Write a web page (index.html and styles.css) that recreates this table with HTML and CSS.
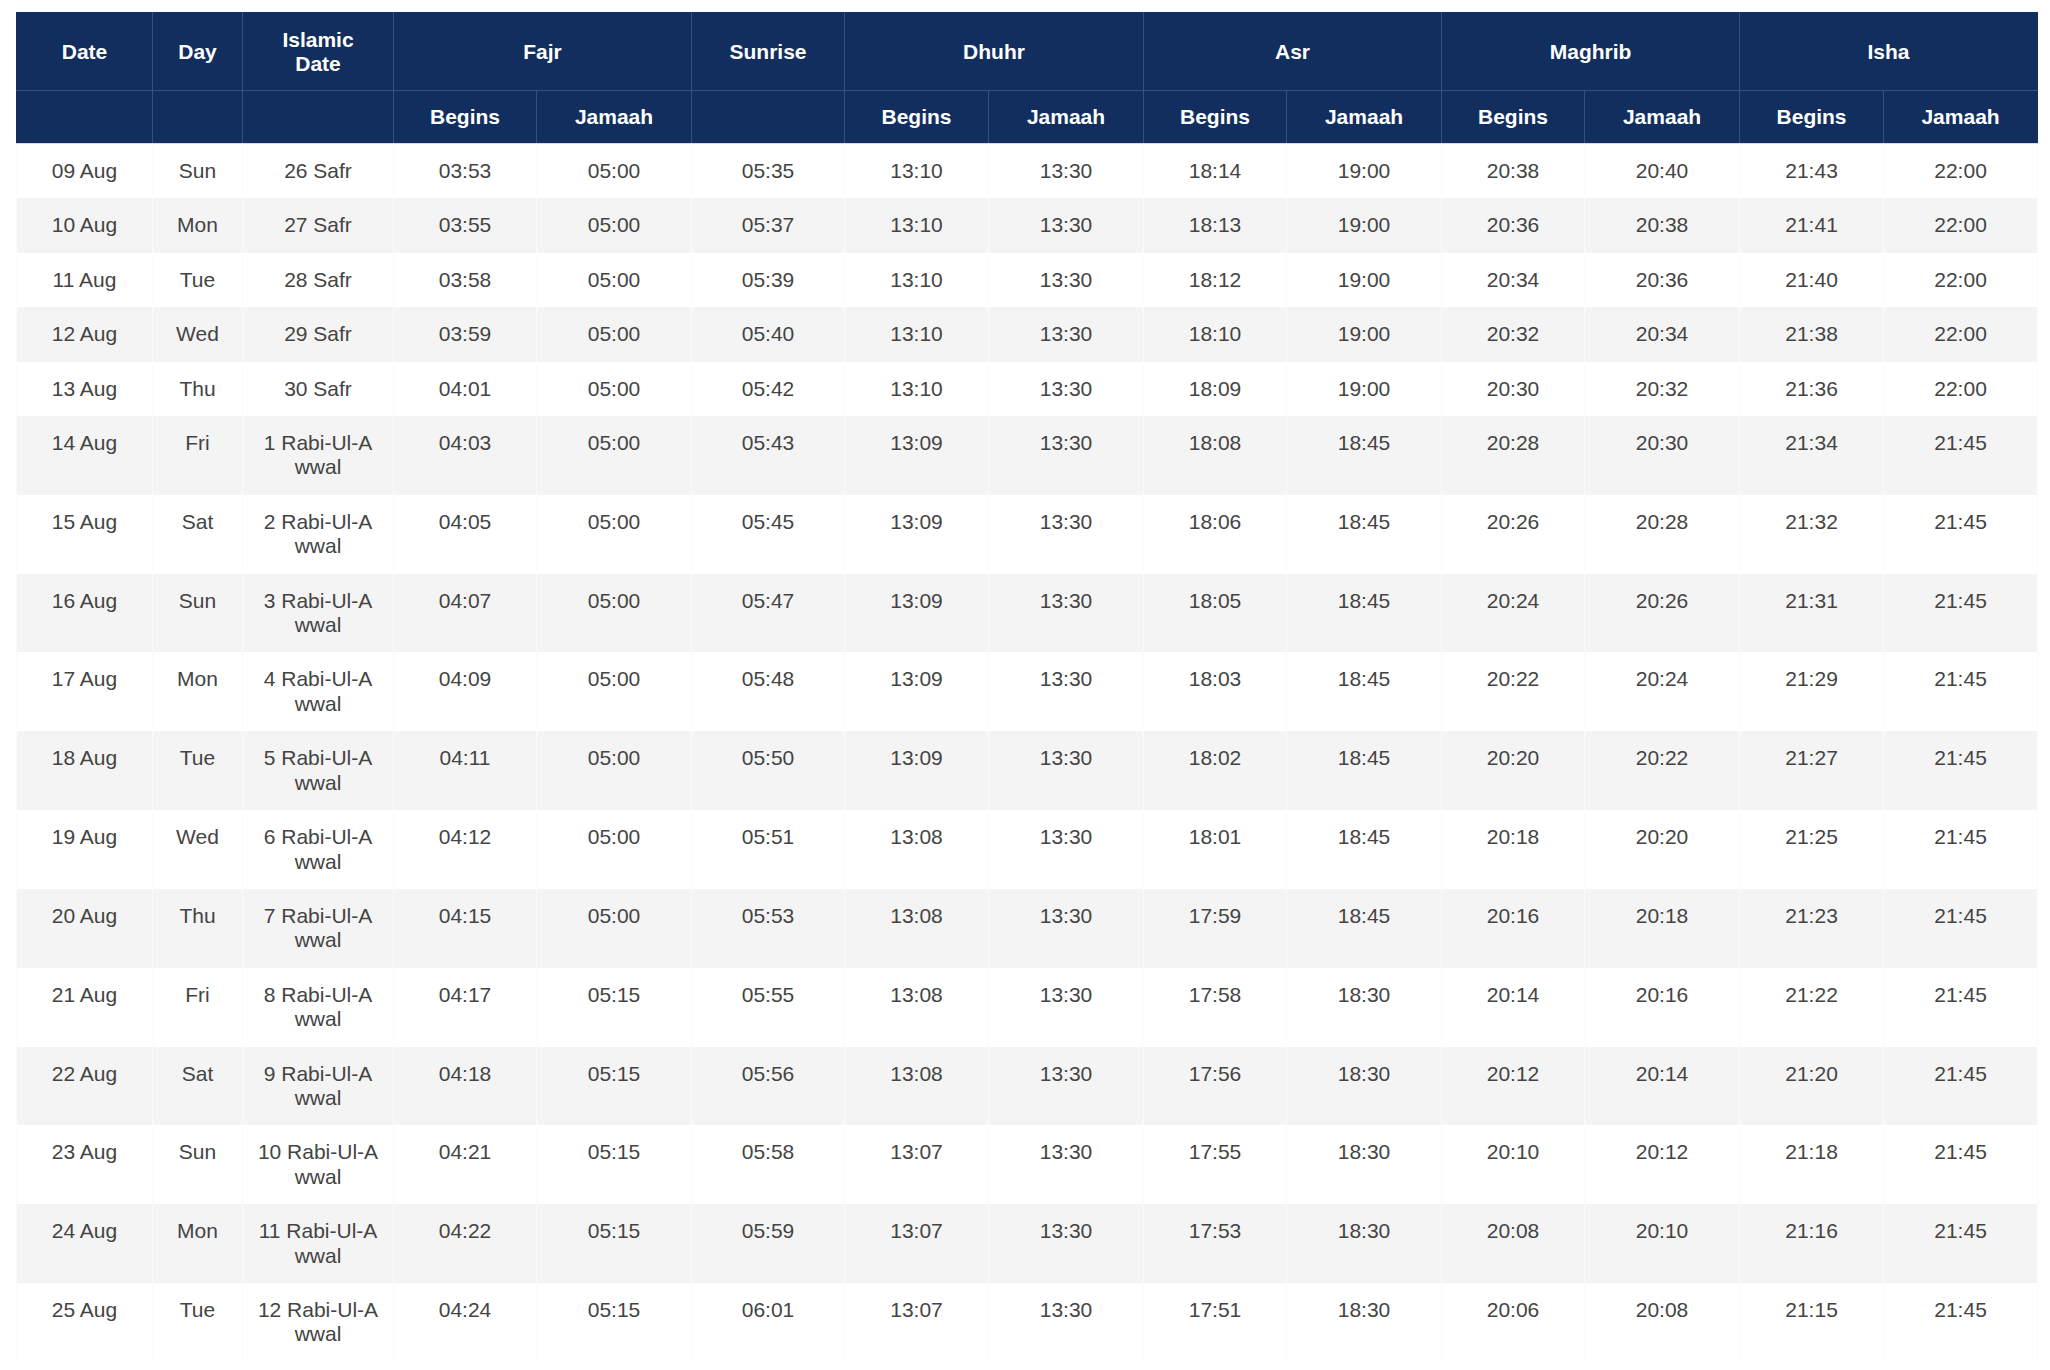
FILE: index.html
```html
<!DOCTYPE html>
<html lang="en">
<head>
<meta charset="utf-8">
<title>Prayer Timetable</title>
<link rel="stylesheet" href="styles.css">
</head>
<body>
<div class="wrap">
<table class="times">
<colgroup>
<col class="c-date"><col class="c-day"><col class="c-isl">
<col class="c-fb"><col class="c-fj"><col class="c-sun">
<col class="c-db"><col class="c-dj"><col class="c-ab"><col class="c-aj">
<col class="c-mb"><col class="c-mj"><col class="c-ib"><col class="c-ij">
</colgroup>
<thead>
<tr class="h1">
<th>Date</th><th>Day</th><th>Islamic<br>Date</th>
<th colspan="2">Fajr</th><th>Sunrise</th><th colspan="2">Dhuhr</th>
<th colspan="2">Asr</th><th colspan="2">Maghrib</th><th colspan="2">Isha</th>
</tr>
<tr class="h2">
<th></th><th></th><th></th>
<th>Begins</th><th>Jamaah</th><th></th>
<th>Begins</th><th>Jamaah</th><th>Begins</th><th>Jamaah</th>
<th>Begins</th><th>Jamaah</th><th>Begins</th><th>Jamaah</th>
</tr>
</thead>
<tbody>
<tr><td>09 Aug</td><td>Sun</td><td class="isl">26 Safr</td><td>03:53</td><td>05:00</td><td>05:35</td><td>13:10</td><td>13:30</td><td>18:14</td><td>19:00</td><td>20:38</td><td>20:40</td><td>21:43</td><td>22:00</td></tr>
<tr><td>10 Aug</td><td>Mon</td><td class="isl">27 Safr</td><td>03:55</td><td>05:00</td><td>05:37</td><td>13:10</td><td>13:30</td><td>18:13</td><td>19:00</td><td>20:36</td><td>20:38</td><td>21:41</td><td>22:00</td></tr>
<tr><td>11 Aug</td><td>Tue</td><td class="isl">28 Safr</td><td>03:58</td><td>05:00</td><td>05:39</td><td>13:10</td><td>13:30</td><td>18:12</td><td>19:00</td><td>20:34</td><td>20:36</td><td>21:40</td><td>22:00</td></tr>
<tr><td>12 Aug</td><td>Wed</td><td class="isl">29 Safr</td><td>03:59</td><td>05:00</td><td>05:40</td><td>13:10</td><td>13:30</td><td>18:10</td><td>19:00</td><td>20:32</td><td>20:34</td><td>21:38</td><td>22:00</td></tr>
<tr><td>13 Aug</td><td>Thu</td><td class="isl">30 Safr</td><td>04:01</td><td>05:00</td><td>05:42</td><td>13:10</td><td>13:30</td><td>18:09</td><td>19:00</td><td>20:30</td><td>20:32</td><td>21:36</td><td>22:00</td></tr>
<tr><td>14 Aug</td><td>Fri</td><td class="isl">1 Rabi-Ul-Awwal</td><td>04:03</td><td>05:00</td><td>05:43</td><td>13:09</td><td>13:30</td><td>18:08</td><td>18:45</td><td>20:28</td><td>20:30</td><td>21:34</td><td>21:45</td></tr>
<tr><td>15 Aug</td><td>Sat</td><td class="isl">2 Rabi-Ul-Awwal</td><td>04:05</td><td>05:00</td><td>05:45</td><td>13:09</td><td>13:30</td><td>18:06</td><td>18:45</td><td>20:26</td><td>20:28</td><td>21:32</td><td>21:45</td></tr>
<tr><td>16 Aug</td><td>Sun</td><td class="isl">3 Rabi-Ul-Awwal</td><td>04:07</td><td>05:00</td><td>05:47</td><td>13:09</td><td>13:30</td><td>18:05</td><td>18:45</td><td>20:24</td><td>20:26</td><td>21:31</td><td>21:45</td></tr>
<tr><td>17 Aug</td><td>Mon</td><td class="isl">4 Rabi-Ul-Awwal</td><td>04:09</td><td>05:00</td><td>05:48</td><td>13:09</td><td>13:30</td><td>18:03</td><td>18:45</td><td>20:22</td><td>20:24</td><td>21:29</td><td>21:45</td></tr>
<tr><td>18 Aug</td><td>Tue</td><td class="isl">5 Rabi-Ul-Awwal</td><td>04:11</td><td>05:00</td><td>05:50</td><td>13:09</td><td>13:30</td><td>18:02</td><td>18:45</td><td>20:20</td><td>20:22</td><td>21:27</td><td>21:45</td></tr>
<tr><td>19 Aug</td><td>Wed</td><td class="isl">6 Rabi-Ul-Awwal</td><td>04:12</td><td>05:00</td><td>05:51</td><td>13:08</td><td>13:30</td><td>18:01</td><td>18:45</td><td>20:18</td><td>20:20</td><td>21:25</td><td>21:45</td></tr>
<tr><td>20 Aug</td><td>Thu</td><td class="isl">7 Rabi-Ul-Awwal</td><td>04:15</td><td>05:00</td><td>05:53</td><td>13:08</td><td>13:30</td><td>17:59</td><td>18:45</td><td>20:16</td><td>20:18</td><td>21:23</td><td>21:45</td></tr>
<tr><td>21 Aug</td><td>Fri</td><td class="isl">8 Rabi-Ul-Awwal</td><td>04:17</td><td>05:15</td><td>05:55</td><td>13:08</td><td>13:30</td><td>17:58</td><td>18:30</td><td>20:14</td><td>20:16</td><td>21:22</td><td>21:45</td></tr>
<tr><td>22 Aug</td><td>Sat</td><td class="isl">9 Rabi-Ul-Awwal</td><td>04:18</td><td>05:15</td><td>05:56</td><td>13:08</td><td>13:30</td><td>17:56</td><td>18:30</td><td>20:12</td><td>20:14</td><td>21:20</td><td>21:45</td></tr>
<tr><td>23 Aug</td><td>Sun</td><td class="isl">10 Rabi-Ul-Awwal</td><td>04:21</td><td>05:15</td><td>05:58</td><td>13:07</td><td>13:30</td><td>17:55</td><td>18:30</td><td>20:10</td><td>20:12</td><td>21:18</td><td>21:45</td></tr>
<tr><td>24 Aug</td><td>Mon</td><td class="isl">11 Rabi-Ul-Awwal</td><td>04:22</td><td>05:15</td><td>05:59</td><td>13:07</td><td>13:30</td><td>17:53</td><td>18:30</td><td>20:08</td><td>20:10</td><td>21:16</td><td>21:45</td></tr>
<tr><td>25 Aug</td><td>Tue</td><td class="isl">12 Rabi-Ul-Awwal</td><td>04:24</td><td>05:15</td><td>06:01</td><td>13:07</td><td>13:30</td><td>17:51</td><td>18:30</td><td>20:06</td><td>20:08</td><td>21:15</td><td>21:45</td></tr>
</tbody>
</table>
</div>
</body>
</html>
```

FILE: styles.css
```css
html, body {
  margin: 0;
  padding: 0;
  background: #ffffff;
}

.wrap {
  padding: 12px 13px 0 16px;
}

.times {
  width: 2021px;
  border-collapse: collapse;
  table-layout: fixed;
  font-family: "Liberation Sans", Arial, Helvetica, sans-serif;
  font-size: 21px;
  line-height: 24.4px;
  text-align: center;
}

.c-date { width: 136px; }
.c-day { width: 90px; }
.c-isl { width: 151px; }
.c-fb { width: 143px; }
.c-fj { width: 155px; }
.c-sun { width: 153px; }
.c-db { width: 144px; }
.c-dj { width: 155px; }
.c-ab { width: 143px; }
.c-aj { width: 155px; }
.c-mb { width: 143px; }
.c-mj { width: 155px; }
.c-ib { width: 144px; }
.c-ij { width: 154px; }

.times thead th {
  background: #112e5e;
  color: #ffffff;
  font-weight: bold;
  line-height: 24px;
  border: 1px solid #34507f;
  padding: 14.5px 10px 14px;
  vertical-align: middle;
}

.times thead tr:first-child th {
  border-top-color: #112e5e;
}

.times thead th:first-child {
  border-left-color: #112e5e;
}

.times thead th:last-child {
  border-right-color: #112e5e;
}

.times thead .h2 th {
  border-bottom: 1px solid #d3dbe8;
}

.times tbody td {
  color: #444444;
  padding: 15px 14px;
  vertical-align: top;
  border: 1px solid #fbfbfb;
  border-top: 0;
  border-bottom: 0;
}

.times tbody tr:nth-child(even) td {
  background: #f4f4f4;
}

.times tbody td.isl {
  word-break: break-all;
}
```
